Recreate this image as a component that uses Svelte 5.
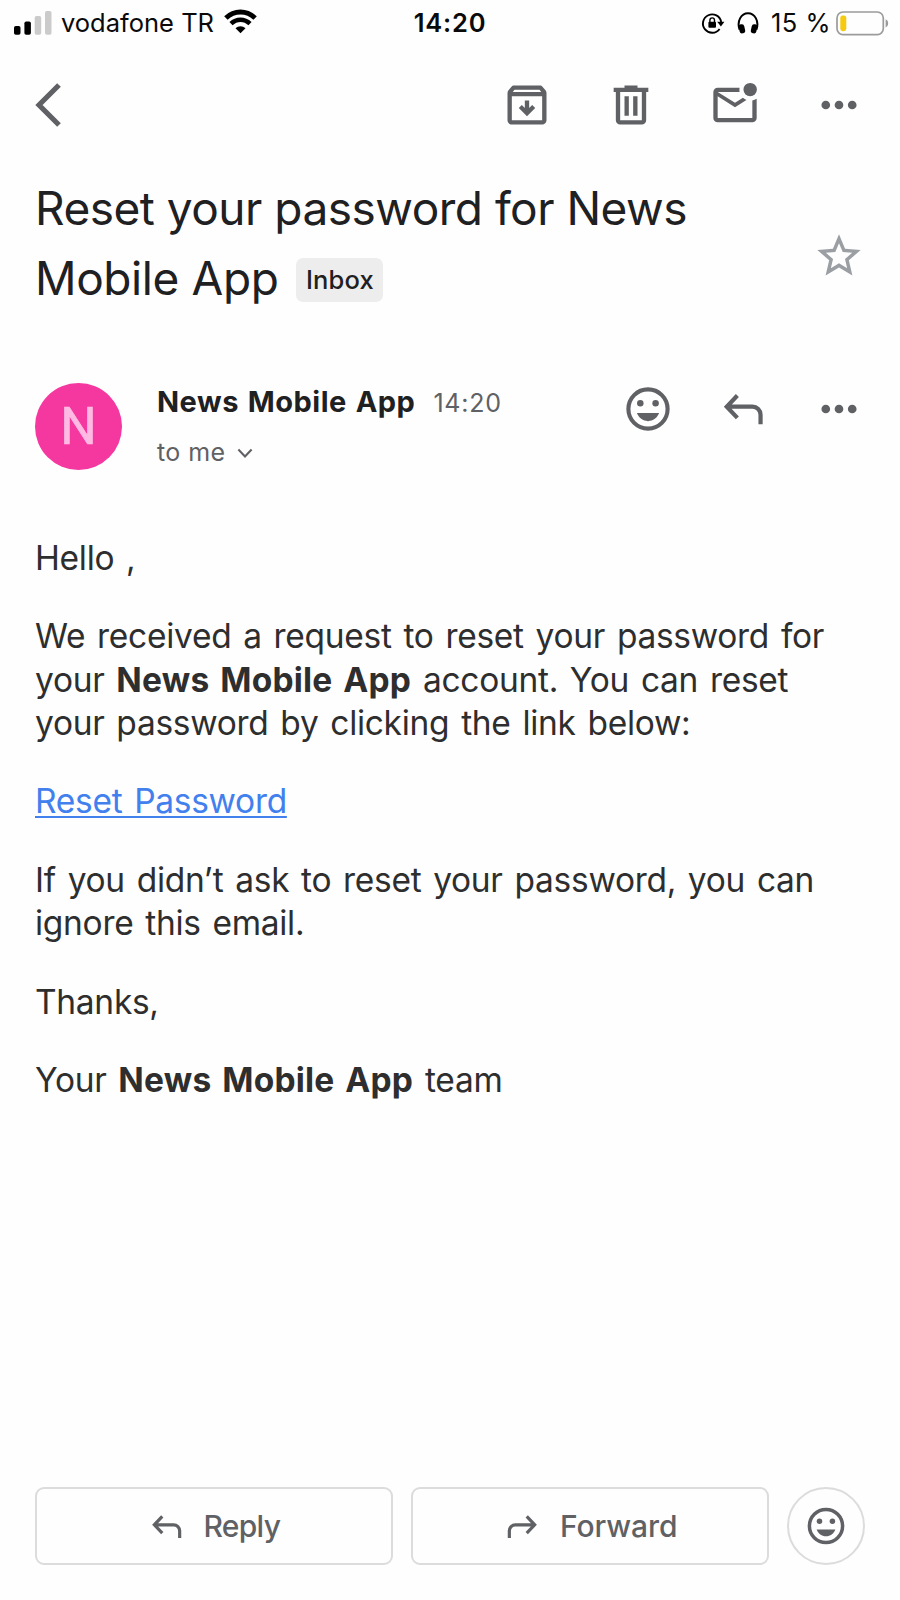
<script>
  const appName = 'News Mobile App';
</script>

{#snippet dots()}
  <svg class="icon" viewBox="0 0 24 24"><circle cx="5.9" cy="12" r="2" /><circle cx="12" cy="12" r="2" /><circle cx="18.1" cy="12" r="2" /></svg>
{/snippet}

{#snippet smile()}
  <svg class="icon" viewBox="0 0 24 24">
    <circle cx="12" cy="12" r="9.05" fill="none" stroke="currentColor" stroke-width="1.9" />
    <circle cx="8.45" cy="9.4" r="1.5" /><circle cx="15.5" cy="9.4" r="1.5" />
    <path d="M6.9 13.9h10.2c-.8 2.2-2.8 3.7-5.1 3.7s-4.3-1.5-5.1-3.7z" />
  </svg>
{/snippet}

{#snippet arrow(flip)}
  <svg class="icon" class:flip viewBox="0 0 24 24">
    <path d="M9.4 5.8 4.5 10.95l4.9 5.15M4.6 10.95h11.8a3.7 3.7 0 0 1 3.7 3.7v4.4" fill="none" stroke="currentColor" stroke-width="1.95" />
  </svg>
{/snippet}

<div class="screen">
  <header class="status">
    <div class="left">
      <svg width="38" height="24" viewBox="0 0 38 24">
        <rect x="0" y="15" width="6.5" height="8.7" rx="1.8" fill="#000" />
        <rect x="10.4" y="10.5" width="6.5" height="13.2" rx="1.8" fill="#000" />
        <rect x="20.7" y="5" width="6.5" height="18.7" rx="1.8" fill="#cbcbcb" />
        <rect x="31" y="0" width="6.5" height="23.7" rx="1.8" fill="#cbcbcb" />
      </svg>
      <span class="carrier">vodafone TR</span>
      <svg class="wifi" width="33" height="25" viewBox="0 0 33 25">
        <path d="M1.9 9.1C10.2 1 22.8 1 31.1 9.1" fill="none" stroke="#000" stroke-width="4.9" />
        <path d="M7 14.7c5.5-5.3 13.5-5.3 19 0" fill="none" stroke="#000" stroke-width="4.5" />
        <path d="M16.5 24.3l-5-5c2.8-2.7 7.2-2.7 10 0z" />
      </svg>
    </div>
    <span class="clock">14:20</span>
    <div class="right">
      <svg width="24" height="24" viewBox="0 0 24 24">
        <path d="M18.6 18A9.2 9.2 0 1 1 20.2 11" fill="none" stroke="#000" stroke-width="1.9" />
        <path d="M16.2 10.8h7.2l-3.5 4.6z" />
        <rect x="7.4" y="10.8" width="7.6" height="5.9" rx="1" />
        <path d="M8.9 11V9.2a2.3 2.3 0 0 1 4.6 0V11" fill="none" stroke="#000" stroke-width="1.4" />
      </svg>
      <svg class="phones" width="22" height="22" viewBox="0 0 22 22">
        <path d="M2.6 17.6C-.4 9.4 4 1.3 11 1.3s11.4 8.1 8.4 16.3" fill="none" stroke="#000" stroke-width="2" />
        <rect x="2.2" y="12.2" width="5.6" height="9.2" rx="2.5" transform="rotate(-12 5 17)" />
        <rect x="14.2" y="12.2" width="5.6" height="9.2" rx="2.5" transform="rotate(12 17 17)" />
      </svg>
      <span class="percent">15 %</span>
      <svg width="53" height="25" viewBox="0 0 53 25">
        <rect x="1" y="1" width="46.3" height="22.6" rx="6" fill="none" stroke="#9b9b9b" stroke-width="1.7" />
        <rect x="4.3" y="4.4" width="6" height="15.8" rx="2.4" fill="#f7ca12" />
        <path d="M49.6 8.2c3.4 1.2 3.4 7 0 8.2z" fill="#9b9b9b" />
      </svg>
    </div>
  </header>

  <nav class="toolbar">
    <svg class="back" width="27" height="44" viewBox="0 0 27 44"><path d="M24 2 4 22l20 20" fill="none" stroke="currentColor" stroke-width="5.2" /></svg>
    <div class="actions">
      <svg class="icon" viewBox="0 0 24 24">
        <path d="M20.54 5.23l-1.39-1.68C18.88 3.21 18.47 3 18 3H6c-.47 0-.88.21-1.16.55L3.46 5.23C3.17 5.57 3 6.02 3 6.5V19c0 1.1.9 2 2 2h14c1.1 0 2-.9 2-2V6.5c0-.48-.17-.93-.46-1.27zM6.24 5h11.52l.83 1H5.42l.82-1zM5 19V8h14v11H5z" />
        <path d="M15.8 13.4l-1.4-1.4-1.4 1.4V9.9h-2v3.5L9.6 12l-1.4 1.4 3.8 3.8z" />
      </svg>
      <svg class="icon" viewBox="0 0 24 24">
        <path d="M15 4V3H9v1H4v2h1v13c0 1.1.9 2 2 2h10c1.1 0 2-.9 2-2V6h1V4h-5zm2 15H7V6h10v13z" />
        <path d="M9 8h2v9H9zM13 8h2v9h-2z" />
      </svg>
      <svg class="icon" viewBox="0 0 24 24">
        <path d="M22 9.1V18c0 1.1-.9 2-2 2H4c-1.1 0-2-.9-2-2V6c0-1.1.9-2 2-2h10.1c-.1.66-.1 1.34 0 2H4l8 5 3.67-2.29c.47.43 1.02.76 1.63.98L12 13 4 8v10h16V9.9c.74-.15 1.42-.48 2-.8z" />
        <circle cx="19" cy="4.9" r="3.1" />
      </svg>
      {@render dots()}
    </div>
  </nav>

  <section class="subject">
    <div class="title">
      <h1>Reset your password for News</h1>
      <div class="second"><h1>Mobile App</h1><span class="chip">Inbox</span></div>
    </div>
    <svg class="icon star" viewBox="0 0 24 24">
      <path d="M22 9.24l-7.19-.62L12 2 9.19 8.63 2 9.24l5.46 4.73L5.82 21 12 17.27 18.18 21l-1.63-7.03L22 9.24zM12 15.4l-3.76 2.27 1-4.28-3.32-2.88 4.38-.38L12 6.1l1.71 4.04 4.38.38-3.32 2.88 1 4.28L12 15.4z" />
    </svg>
  </section>

  <section class="sender">
    <div class="avatar">N</div>
    <div class="who">
      <div class="name"><strong>{appName}</strong><time>14:20</time></div>
      <div class="to"><span>to me</span><svg width="16" height="11" viewBox="0 0 16 11"><path d="M1.4 1.6 8 8.4l6.6-6.8" fill="none" stroke="currentColor" stroke-width="2.1" /></svg></div>
    </div>
    <div class="sender-actions">
      {@render smile()}
      {@render arrow(false)}
      {@render dots()}
    </div>
  </section>

  <article>
    <p>Hello ,</p>
    <p>We received a request to reset your password for your <b>{appName}</b> account. You can reset your password by clicking the link below:</p>
    <p><a href="#reset">Reset Password</a></p>
    <p>If you didn’t ask to reset your password, you can ignore this email.</p>
    <p>Thanks,</p>
    <p>Your <b>{appName}</b> team</p>
  </article>

  <footer>
    <button class="reply">{@render arrow(false)}<span>Reply</span></button>
    <button class="forward">{@render arrow(true)}<span>Forward</span></button>
    <button class="react">{@render smile()}</button>
  </footer>
</div>

<style>
  :global(body) { background: #fff; }
  .screen {
    box-sizing: border-box;
    width: 900px;
    height: 1600px;
    display: flex;
    flex-direction: column;
    background: #fefefe;
    font-family: Inter, "Liberation Sans", sans-serif;
    color: #5f6164;
    overflow: hidden;
  }
  svg { display: block; flex: none; }
  .icon { width: 52px; height: 52px; fill: currentColor; }
  .flip { transform: scaleX(-1); }

  .status {
    height: 46px;
    flex: none;
    display: grid;
    grid-template-columns: 1fr auto 1fr;
    align-items: center;
    padding: 0 11px 0 14px;
    font-size: 25.5px;
    line-height: 46px;
    color: #0a0a0a;
  }
  .left, .right { display: flex; align-items: center; height: 44px; }
  .right { justify-content: flex-end; }
  .carrier { margin-left: 9px; letter-spacing: 0; }
  .wifi { margin-left: 10px; margin-top: -3px; }
  .clock { font-weight: 600; letter-spacing: 0.8px; margin-left: -3px; }
  .phones { margin-left: 12px; }
  .percent { margin: 0 5px 0 11.5px; letter-spacing: 0.5px; }

  .toolbar {
    height: 117px;
    flex: none;
    display: flex;
    align-items: center;
    justify-content: space-between;
    padding: 0 35.5px 0 35px;
  }
  .actions { display: flex; gap: 52px; }

  .subject {
    display: flex;
    justify-content: space-between;
    align-items: flex-start;
    padding: 11px 35px 0;
  }
  h1 {
    margin: 0;
    font-size: 46px;
    font-weight: 400;
    line-height: 69.7px;
    letter-spacing: -0.5px;
    color: #1f2022;
    white-space: nowrap;
  }
  .second { display: flex; align-items: flex-start; gap: 18px; }
  .second h1 { letter-spacing: -0.4px; }
  .chip {
    box-sizing: border-box;
    height: 44px;
    width: 87px;
    margin-top: 14.5px;
    border-radius: 7px;
    background: #ededed;
    color: #1f2022;
    font-size: 25.5px;
    font-weight: 500;
    line-height: 44px;
    letter-spacing: 0.15px;
    text-align: center;
  }
  .star { margin-top: 56px; color: #9b9fa4; }

  .sender {
    display: flex;
    align-items: flex-start;
    padding: 0 35px;
    margin-top: 69.6px;
  }
  .avatar {
    width: 87px;
    height: 87px;
    border-radius: 50%;
    background: #f538a0;
    color: #ffbae3;
    font: 400 51px/88px Roboto, sans-serif;
    text-align: center;
    -webkit-text-stroke: 0.7px #ffbae3;
  }
  .who { margin-left: 35px; flex: 1; }
  .name { display: flex; align-items: baseline; line-height: 38px; }
  .name strong {
    font-size: 29px;
    font-weight: 700;
    letter-spacing: 0.5px;
    word-spacing: 1.5px;
    color: #1f2022;
  }
  .name time { margin-left: 18px; font-size: 25px; letter-spacing: 0.8px; }
  .to { display: flex; align-items: center; margin-top: 13px; font-size: 25px; line-height: 34px; letter-spacing: 0.4px; }
  .to svg { margin: 3px 0 0 12px; }
  .sender-actions { display: flex; gap: 43.6px; }

  article {
    margin-top: 66.9px;
    padding: 0 35px;
    font-size: 33.5px;
    line-height: 43.5px;
    letter-spacing: -0.29px;
    word-spacing: 2.7px;
    color: #2e2e2f;
  }
  p { margin: 0 0 34.8px; }
  b { font-weight: 700; letter-spacing: 0.2px; }
  a { color: #4280ee; text-decoration: underline; text-decoration-thickness: 2px; text-underline-offset: 3px; }

  footer {
    display: flex;
    gap: 18px;
    margin-top: auto;
    padding: 0 35px 35px;
  }
  button {
    box-sizing: border-box;
    height: 78px;
    padding: 0;
    display: flex;
    align-items: center;
    border: 2px solid #dcdcdc;
    border-radius: 9px;
    background: transparent;
    color: #5f6164;
    font: 500 30px/74px Inter, sans-serif;
  }
  .reply, .forward { flex: 1; }
  .reply .icon, .forward .icon { width: 39px; height: 39px; margin-left: 109.5px; }
  .forward .icon { margin-left: 90px; }
  button span { margin-left: 18px; letter-spacing: -0.7px; }
  .forward span { letter-spacing: -0.1px; }
  .react { width: 78px; border-radius: 50%; justify-content: center; }
  .react .icon { width: 44px; height: 44px; }
</style>
